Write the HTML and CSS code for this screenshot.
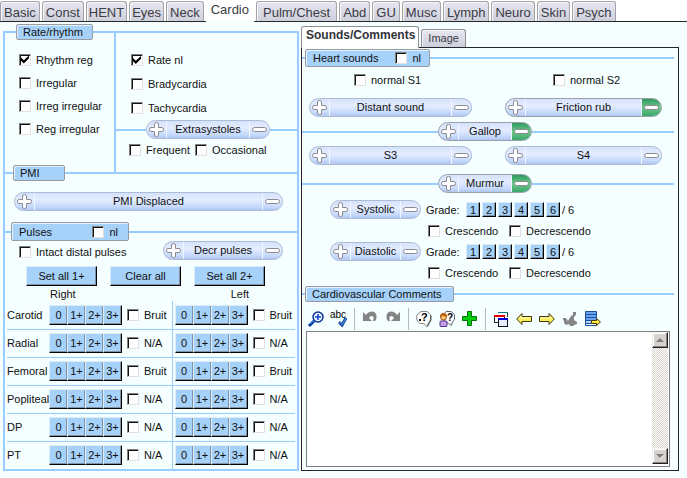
FILE: index.html
```html
<!DOCTYPE html>
<html lang="en">
<head>
<meta charset="utf-8">
<title>Cardio exam</title>
<link rel="stylesheet" href="styles.css">
</head>
<body>
<svg class="defs" aria-hidden="true">
  <symbol id="plus" viewBox="0 0 15 15"><path d="M5.500 2Q5.500.5 7.500.5T9.500 2V5.500H13Q14.500 5.500 14.500 7.500T13 9.500H9.500V13Q9.500 14.500 7.500 14.500T5.500 13V9.500H2Q.5 9.500.5 7.500T2 5.500H5.500Z" fill="#fff" stroke="#8a8a90"/></symbol>
  <symbol id="minus" viewBox="0 0 15 15"><rect x=".5" y="5.5" width="14" height="4" rx="2" fill="#fff" stroke="#8a8a90"/></symbol>
</svg>
<nav class="tabs">
  <a class="tab" href="#">Basic</a><a class="tab" href="#">Const</a><a class="tab tight" href="#">HENT</a><a class="tab tight" href="#">Eyes</a><a class="tab" href="#">Neck</a><a class="tab active" href="#">Cardio</a><a class="tab wide" href="#">Pulm/Chest</a><a class="tab" href="#">Abd</a><a class="tab" href="#">GU</a><a class="tab" href="#">Musc</a><a class="tab" href="#">Lymph</a><a class="tab" href="#">Neuro</a><a class="tab" href="#">Skin</a><a class="tab" href="#">Psych</a>
</nav>
<main class="page">
  <fieldset class="exam">
    <legend class="chip">Rate/rhythm</legend>
    <div class="rate">
      <div class="rhythm">
        <label class="check"><input type="checkbox" checked>Rhythm reg</label>
        <label class="check"><input type="checkbox">Irregular</label>
        <label class="check"><input type="checkbox">Irreg irregular</label>
        <label class="check"><input type="checkbox">Reg irregular</label>
      </div>
      <div class="speed">
        <label class="check"><input type="checkbox" checked>Rate nl</label>
        <label class="check"><input type="checkbox">Bradycardia</label>
        <label class="check"><input type="checkbox">Tachycardia</label>
        <div class="ruled extra">
          <div class="pill"><button aria-label="Extrasystoles present"><svg><use href="#plus"/></svg></button><span>Extrasystoles</span><button aria-label="Extrasystoles absent"><svg><use href="#minus"/></svg></button></div>
        </div>
        <div class="pair">
          <label class="check"><input type="checkbox">Frequent</label>
          <label class="check"><input type="checkbox">Occasional</label>
        </div>
      </div>
    </div>
    <div class="head pmi-head"><div class="chip">PMI</div></div>
    <div class="pill pmi"><button aria-label="PMI displaced present"><svg><use href="#plus"/></svg></button><span>PMI Displaced</span><button aria-label="PMI displaced absent"><svg><use href="#minus"/></svg></button></div>
    <div class="head pulses-head"><div class="chip tall"><span>Pulses</span><label class="check"><input type="checkbox">nl</label></div></div>
    <div class="intact">
      <label class="check"><input type="checkbox">Intact distal pulses</label>
      <div class="pill"><button aria-label="Decreased pulses present"><svg><use href="#plus"/></svg></button><span>Decr pulses</span><button aria-label="Decreased pulses absent"><svg><use href="#minus"/></svg></button></div>
    </div>
    <div class="actions"><button class="key">Set all 1+</button><button class="key">Clear all</button><button class="key">Set all 2+</button></div>
    <div class="sides"><span>Right</span><span>Left</span></div>
    <table class="pulses">
      <tr><th scope="row">Carotid</th>
        <td><div class="grade"><button class="key">0</button><button class="key">1+</button><button class="key">2+</button><button class="key">3+</button><label class="check"><input type="checkbox">Bruit</label></div></td>
        <td><div class="grade"><button class="key">0</button><button class="key">1+</button><button class="key">2+</button><button class="key">3+</button><label class="check"><input type="checkbox">Bruit</label></div></td></tr>
      <tr><th scope="row">Radial</th>
        <td><div class="grade"><button class="key">0</button><button class="key">1+</button><button class="key">2+</button><button class="key">3+</button><label class="check"><input type="checkbox">N/A</label></div></td>
        <td><div class="grade"><button class="key">0</button><button class="key">1+</button><button class="key">2+</button><button class="key">3+</button><label class="check"><input type="checkbox">N/A</label></div></td></tr>
      <tr><th scope="row">Femoral</th>
        <td><div class="grade"><button class="key">0</button><button class="key">1+</button><button class="key">2+</button><button class="key">3+</button><label class="check"><input type="checkbox">Bruit</label></div></td>
        <td><div class="grade"><button class="key">0</button><button class="key">1+</button><button class="key">2+</button><button class="key">3+</button><label class="check"><input type="checkbox">Bruit</label></div></td></tr>
      <tr><th scope="row">Popliteal</th>
        <td><div class="grade"><button class="key">0</button><button class="key">1+</button><button class="key">2+</button><button class="key">3+</button><label class="check"><input type="checkbox">N/A</label></div></td>
        <td><div class="grade"><button class="key">0</button><button class="key">1+</button><button class="key">2+</button><button class="key">3+</button><label class="check"><input type="checkbox">N/A</label></div></td></tr>
      <tr><th scope="row">DP</th>
        <td><div class="grade"><button class="key">0</button><button class="key">1+</button><button class="key">2+</button><button class="key">3+</button><label class="check"><input type="checkbox">N/A</label></div></td>
        <td><div class="grade"><button class="key">0</button><button class="key">1+</button><button class="key">2+</button><button class="key">3+</button><label class="check"><input type="checkbox">N/A</label></div></td></tr>
      <tr><th scope="row">PT</th>
        <td><div class="grade"><button class="key">0</button><button class="key">1+</button><button class="key">2+</button><button class="key">3+</button><label class="check"><input type="checkbox">N/A</label></div></td>
        <td><div class="grade"><button class="key">0</button><button class="key">1+</button><button class="key">2+</button><button class="key">3+</button><label class="check"><input type="checkbox">N/A</label></div></td></tr>
    </table>
  </fieldset>

  <section class="sounds">
    <nav class="subtabs"><a class="subtab active" href="#">Sounds/Comments</a><a class="subtab" href="#">Image</a></nav>
    <div class="panel">
      <div class="head heart-head"><div class="chip tall"><span>Heart sounds</span><label class="check"><input type="checkbox">nl</label></div></div>
      <div class="two normals">
        <label class="check"><input type="checkbox">normal S1</label>
        <label class="check"><input type="checkbox">normal S2</label>
      </div>
      <div class="two">
        <div class="pill"><button aria-label="Distant sound present"><svg><use href="#plus"/></svg></button><span>Distant sound</span><button aria-label="Distant sound absent"><svg><use href="#minus"/></svg></button></div>
        <div class="pill set"><button aria-label="Friction rub present"><svg><use href="#plus"/></svg></button><span>Friction rub</span><button class="on" aria-label="Friction rub absent"><svg><use href="#minus"/></svg></button></div>
      </div>
      <div class="ruled">
        <div class="pill set"><button aria-label="Gallop present"><svg><use href="#plus"/></svg></button><span>Gallop</span><button class="on" aria-label="Gallop absent"><svg><use href="#minus"/></svg></button></div>
      </div>
      <div class="two">
        <div class="pill"><button aria-label="S3 present"><svg><use href="#plus"/></svg></button><span>S3</span><button aria-label="S3 absent"><svg><use href="#minus"/></svg></button></div>
        <div class="pill"><button aria-label="S4 present"><svg><use href="#plus"/></svg></button><span>S4</span><button aria-label="S4 absent"><svg><use href="#minus"/></svg></button></div>
      </div>
      <div class="ruled murmur-head">
        <div class="pill set"><button aria-label="Murmur present"><svg><use href="#plus"/></svg></button><span>Murmur</span><button class="on" aria-label="Murmur absent"><svg><use href="#minus"/></svg></button></div>
      </div>
      <div class="murmur">
        <div class="pill"><button aria-label="Systolic present"><svg><use href="#plus"/></svg></button><span>Systolic</span><button aria-label="Systolic absent"><svg><use href="#minus"/></svg></button></div>
        <div class="scale"><span>Grade:</span><button class="key">1</button><button class="key">2</button><button class="key">3</button><button class="key">4</button><button class="key">5</button><button class="key">6</button>/ 6</div>
        <div class="shape"><label class="check"><input type="checkbox">Crescendo</label><label class="check"><input type="checkbox">Decrescendo</label></div>
        <div class="pill"><button aria-label="Diastolic present"><svg><use href="#plus"/></svg></button><span>Diastolic</span><button aria-label="Diastolic absent"><svg><use href="#minus"/></svg></button></div>
        <div class="scale"><span>Grade:</span><button class="key">1</button><button class="key">2</button><button class="key">3</button><button class="key">4</button><button class="key">5</button><button class="key">6</button>/ 6</div>
        <div class="shape"><label class="check"><input type="checkbox">Crescendo</label><label class="check"><input type="checkbox">Decrescendo</label></div>
      </div>
      <div class="head comments-head"><label class="chip" for="comments">Cardiovascular Comments</label></div>
      <div class="toolbar">
        <button aria-label="Zoom"><svg viewBox="0 0 16 16"><path d="M1 15L6 10" stroke="#003ca0" stroke-width="3"/><path d="M2 13L5.500 9.500" stroke="#4a90f0"/><circle cx="10" cy="6" r="5" fill="#e8f6ff" stroke="#0a3296" stroke-width="1.5"/><path d="M7 6H13M10 3V9" stroke="#1040d0" stroke-width="1.5"/></svg></button>
        <button aria-label="Check spelling"><svg viewBox="0 0 16 16"><text x="-1" y="7" font-size="10" fill="#000">abc</text><path d="M8 11L11 14L15 7" fill="none" stroke="#12489c" stroke-width="3"/><path d="M8.500 11L11 13.500L15 7.500" fill="none" stroke="#5a9cf0"/></svg></button>
        <i class="sep"></i>
        <button aria-label="Undo"><svg viewBox="0 0 16 16"><path d="M1 1V10H10L7 7Q8 5 10 5Q12.500 5.500 11 10H13Q15 8 14.500 4.500Q13.500.500 10 .5Q6 .5 4 4Z" fill="#848484"/></svg></button>
        <button aria-label="Redo"><svg viewBox="0 0 16 16"><path d="M15 1V10H6L9 7Q8 5 6 5Q3.500 5.500 5 10H3Q1 8 1.500 4.500Q2.500.500 6 .5Q10 .5 12 4Z" fill="#848484"/></svg></button>
        <i class="sep"></i>
        <button aria-label="Help"><svg viewBox="0 0 16 16"><path d="M5 .5H11L14.500 3.500V8.500L12.500 11.500L11 15.500L7.500 12.500H4L.8 9V4Z" fill="#fff" stroke="#888"/><path d="M15 4.500V9L13 12.500L11.500 15.500" fill="none" stroke="#444"/><text x="5" y="10" font-size="11" font-weight="700">?</text><rect x="3" y="8" width="2" height="2"/></svg></button>
        <button aria-label="Ask a person"><svg viewBox="0 0 16 16"><path d="M7 .5H12L15.500 3.500V8.500L13.500 11L12.500 14.500L9.500 12.500L5 10V3Z" fill="#fff" stroke="#666"/><text x="8" y="10" font-size="10" font-weight="700">?</text><rect x="1" y="10" width="7" height="5.500" rx="1" fill="#c8a0f0" stroke="#503080"/><circle cx="4.500" cy="6" r="3" fill="#ffc878" stroke="#a05010"/><path d="M1 6Q1 2 4.500 2T8 6Q5 5 4 4.500Q2.500 6 1 6Z" fill="#b86010"/></svg></button>
        <button aria-label="Add"><svg viewBox="0 0 16 16"><path d="M5.500.500H9.500V5.500H14.500V9.500H9.500V14.500H5.500V9.500H.5V5.500H5.500Z" fill="#00cc10" stroke="#087008"/></svg></button>
        <i class="sep"></i>
        <button aria-label="Windows"><svg viewBox="0 0 16 16" shape-rendering="crispEdges"><path d="M5 1H15V9H5Z" fill="#fff"/><path d="M5 1H15V2H5Z" fill="#008080"/><path d="M14 2H15V6H14Z" fill="#333"/><path d="M1 4H12V12H1Z" fill="#222"/><path d="M2 6H11V11H2Z" fill="#fff"/><path d="M1 4H12V6H1Z" fill="#e00000"/><path d="M5 7H15V16H5Z" fill="#111"/><path d="M6 9H14V15H6Z" fill="#e8ecff"/><path d="M5 7H15V9H5Z" fill="#0000e0"/></svg></button>
        <button aria-label="Previous"><svg viewBox="0 0 16 16"><path d="M.7 8L6 2.500V5.500H15.500V10.500H6V13.500Z" fill="#ffee50" stroke="#3c3810"/><path d="M3 8L5.500 5.500V7H14" fill="none" stroke="#fffcd0"/></svg></button>
        <button aria-label="Next"><svg viewBox="0 0 16 16"><path d="M15.300 8L10 2.500V5.500H.5V10.500H10V13.500Z" fill="#ffee50" stroke="#3c3810"/><path d="M1 7H11V6L12.500 8" fill="none" stroke="#fffcd0"/></svg></button>
        <button aria-label="Sign"><svg viewBox="0 0 16 16"><path d="M11 1H14V4L12 6V9L15 11V13L12 14L11 15H8L7 13L4 14L2 12V10L1 9V7H4L6 10L9 5L11 4Z" fill="#858585"/></svg></button>
        <button aria-label="Insert list"><svg viewBox="0 0 16 16"><path d="M.5.500H11.500V14.500H.5Z" fill="#fff" stroke="#1a4fa0"/><path d="M1 2H11M1 5H11M1 8H11M1 11H7" stroke="#6aa4f0" stroke-width="2"/><path d="M1 3.500H11M1 6.500H11M1 9.500H7M1 12.500H7" stroke="#1a4fa0"/><path d="M1 11H6M1 13.500H7" stroke="#fff"/><path d="M6.500 9.500H11.500V7.500L15.500 11L11.500 14.500V12.500H6.500Z" fill="#ffe840" stroke="#4a3c08"/></svg></button>
      </div>
      <div class="editor">
        <textarea id="comments"></textarea>
        <div class="scroll"><button aria-label="Scroll up"><svg viewBox="0 0 8 5"><path d="M0 4L4 0L8 4Z" fill="#808080"/></svg></button><button aria-label="Scroll down"><svg viewBox="0 0 8 5"><path d="M4 5L8.500 1H8L4 4Z" fill="#fff"/><path d="M0 0L4 4L8 0Z" fill="#808080"/></svg></button></div>
      </div>
    </div>
  </section>
</main>
</body>
</html>
```
FILE: styles.css
```css
* { box-sizing: border-box; }
body { margin: 0; min-height: 100vh; background: #f5ffff; color: #111; font: 11px/14px "Liberation Sans", Arial, sans-serif; }
button, textarea { font: inherit; color: inherit; margin: 0; padding: 0; border: 0; background: none; }
button { display: flex; align-items: center; justify-content: center; }
a { color: inherit; text-decoration: none; }
.defs { display: none; }

.tabs { display: flex; gap: 2px; height: 22px; background: #fff; border-bottom: 1px solid #26262c; font-size: 13px; }
.tab { height: 20px; margin-top: 1px; padding: 0 3px; border: 1px solid #a4a4a8; border-bottom: 0; border-radius: 3px 3px 0 0; box-shadow: inset 1px 1px #f6f6fa; background: linear-gradient(#e6e7f0, #cdcfdb); color: #3c3c44; line-height: 22px; }
.tab.tight { padding: 0 2px; }
.tab.wide { padding: 0 6px; }
.tab.active { height: 22px; margin-top: 0; padding: 0 4px; background: #fff; border-color: #fff; line-height: 18px; box-shadow: none; }

.page { display: grid; grid-template-columns: 296fr 378fr; gap: 2px; padding: 2px 8px 0 3px; }
.exam { min-width: 0; margin: 0; padding: 0; border: 2px solid #99ccff; }
.chip { height: 16px; padding: 0 10px 0 6px; border: 1px solid #999ba0; border-radius: 2px; background: #a6d2fa; box-shadow: inset 1px 1px #e4f2ff; line-height: 14px; }
.exam > .chip { margin-left: 11px; padding: 0 9px 0 6px; }
.chip.tall { display: flex; justify-content: space-between; align-items: center; height: 19px; padding: 0 10px 0 7px; }

.check { display: flex; align-items: center; gap: 5px; white-space: nowrap; }
input { appearance: none; flex: none; width: 12px; height: 12px; margin: 0; background: #fff; border: 1px solid; border-color: #808080 #e4dede #e4dede #808080; box-shadow: inset 1px 1px #111; }
input:checked::before { content: ""; display: block; width: 8px; height: 8px; margin: 1px; background: #000; clip-path: polygon(0 25%, 35% 60%, 100% 0, 100% 35%, 35% 100%, 0 65%); }

.rate { display: grid; grid-template-columns: 109px 1fr; height: 140px; margin-top: -7px; }
.rhythm { padding: 15px 0 0 14px; }
.rhythm .check { height: 23px; }
.speed { padding-top: 15px; border-left: 2px solid #99ccff; }
.speed > .check { height: 24px; padding-left: 15px; }
.pair { display: flex; gap: 5px; height: 22px; padding-left: 13px; }

.head { display: flex; align-items: center; }
.head::before, .head::after { content: ""; height: 2px; background: #99ccff; }
.head::after { flex: 1; }
.pmi-head { margin-top: -8px; }
.pmi-head::before { width: 8px; }
.pmi-head .chip { width: 52px; }
.pulses-head { margin-top: 11px; }
.pulses-head::before { width: 6px; }
.pulses-head .chip { width: 118px; }
.heart-head, .comments-head { margin-right: 4px; }
.heart-head::before, .comments-head::before { width: 3px; }
.heart-head .chip { width: 125px; height: 18px; padding-right: 8px; }
.comments-head { margin-top: 3px; }
.comments-head .chip { width: 149px; padding-right: 0; }

.pill { display: flex; height: 19px; border: 1px solid #aebbd6; border-radius: 10px; overflow: hidden; background: linear-gradient(#d4e2fb, #e4edff 40%, #c2d6fb 85%, #b0c6f0); }
.pill span { flex: 1; text-align: center; line-height: 17px; white-space: nowrap; }
.pill button { width: 20px; flex: none; }
.pill button:first-child { border-right: 1px solid #f2f7ff; }
.pill button:last-child { border-left: 1px solid #f2f7ff; }
.pill svg { flex: none; width: 15px; height: 15px; }
.pill.set { border-color: #9a9fae; }
.pill .on { background: linear-gradient(#2f9a5c, #6cc48c 50%, #3aa868); }
.ruled { display: grid; grid-template-columns: 136fr 94px 142fr; align-items: center; margin: 5px 4px 0 0; }
.ruled::before, .ruled::after { content: ""; height: 2px; background: #99ccff; }
.extra { grid-template-columns: 30fr 124px 27fr; margin: 0; }
.pmi { margin: 11px 14px 0 9px; }

.intact { display: flex; justify-content: space-between; height: 20px; padding: 0 14px; }
.intact .check { padding-top: 2px; }
.intact .pill { width: 120px; }
.key { background: #a6d2fa; border: 1px solid; border-color: #dcecfa #000 #000 #dcecfa; box-shadow: inset -1px -1px #7f93a6; }
.actions { display: flex; gap: 13px; margin: 5px 32px 0 21px; }
.actions .key { flex: 1; height: 20px; }
.sides { display: flex; justify-content: space-between; height: 15px; padding: 1px 48px 0 45px; }

.pulses { width: calc(100% - 4px); margin: 0 2px; border-collapse: collapse; table-layout: fixed; }
.pulses th { width: 42px; padding: 0; font-weight: 400; text-align: left; }
.pulses td { height: 28px; padding: 0; }
.pulses td + td { border-left: 1px solid #99ccff; padding-left: 2px; }
.pulses tr + tr > * { border-top: 1px solid #99ccff; }
.grade { display: flex; align-items: center; }
.grade .key { flex: none; width: 19px; height: 20px; margin-right: -1px; }
.grade .check { margin-left: 6px; }

.sounds { padding-top: 2px; min-width: 0; }
.subtabs { display: flex; align-items: flex-end; gap: 2px; height: 22px; margin-bottom: -1px; }
.subtab { height: 18px; margin-bottom: 1px; padding: 0 6px; border: 1px solid #8e8e94; border-bottom: 0; border-radius: 3px 3px 0 0; background: linear-gradient(#e6e7f0, #cdcfdb); box-shadow: inset 1px 1px #f6f6fa; color: #3c3c44; line-height: 17px; }
.subtab.active { height: 22px; margin: 0; padding: 0 3px 0 4px; position: relative; background: #fff; color: #33333a; font-weight: 700; font-size: 12px; box-shadow: none; }
.panel { border: 1px solid #26262c; padding: 1px 0 3px; }
.two { display: grid; grid-template-columns: 163fr 157fr; gap: 33px; margin: 5px 16px 0 7px; }
.normals { grid-template-columns: 199fr 154fr; gap: 0; height: 26px; margin-top: 0; }
.normals .check { padding-left: 45px; }
.murmur-head { margin-top: 9px; }
.murmur { display: grid; grid-template-columns: 91px 1fr; grid-auto-rows: 21px; column-gap: 5px; align-items: center; margin: 6px 0 0 28px; }
.scale { display: flex; align-items: center; gap: 2px; }
.scale span { width: 38px; }
.scale .key { width: 14px; height: 15px; }
.shape { grid-column: 2; display: grid; grid-template-columns: 81px 1fr; padding-left: 2px; }

.toolbar { display: flex; align-items: center; gap: 7px; height: 22px; margin: 6px 0 1px 6px; }
.toolbar svg { display: block; width: 16px; height: 16px; overflow: visible; }
.sep { width: 1px; height: 22px; background: #b4b8bc; }
.editor { display: flex; height: 136px; margin: 0 8px 0 4px; padding-right: 1px; border: 1px solid #808080; background: #fff; }
textarea { flex: 1; resize: none; outline: 0; }
.scroll { display: flex; flex-direction: column; justify-content: space-between; width: 16px; margin-bottom: 2px; background: repeating-conic-gradient(#d8d4cc 0 25%, #fff 0 50%) 0 0 / 2px 2px; }
.scroll button { height: 16px; background: #d6d3ce; border: 1px solid; border-color: #f4f2ee #222 #222 #f4f2ee; box-shadow: inset -1px -1px #848484, inset 1px 1px #fff; }
.scroll svg { width: 8px; height: 5px; overflow: visible; }
```
